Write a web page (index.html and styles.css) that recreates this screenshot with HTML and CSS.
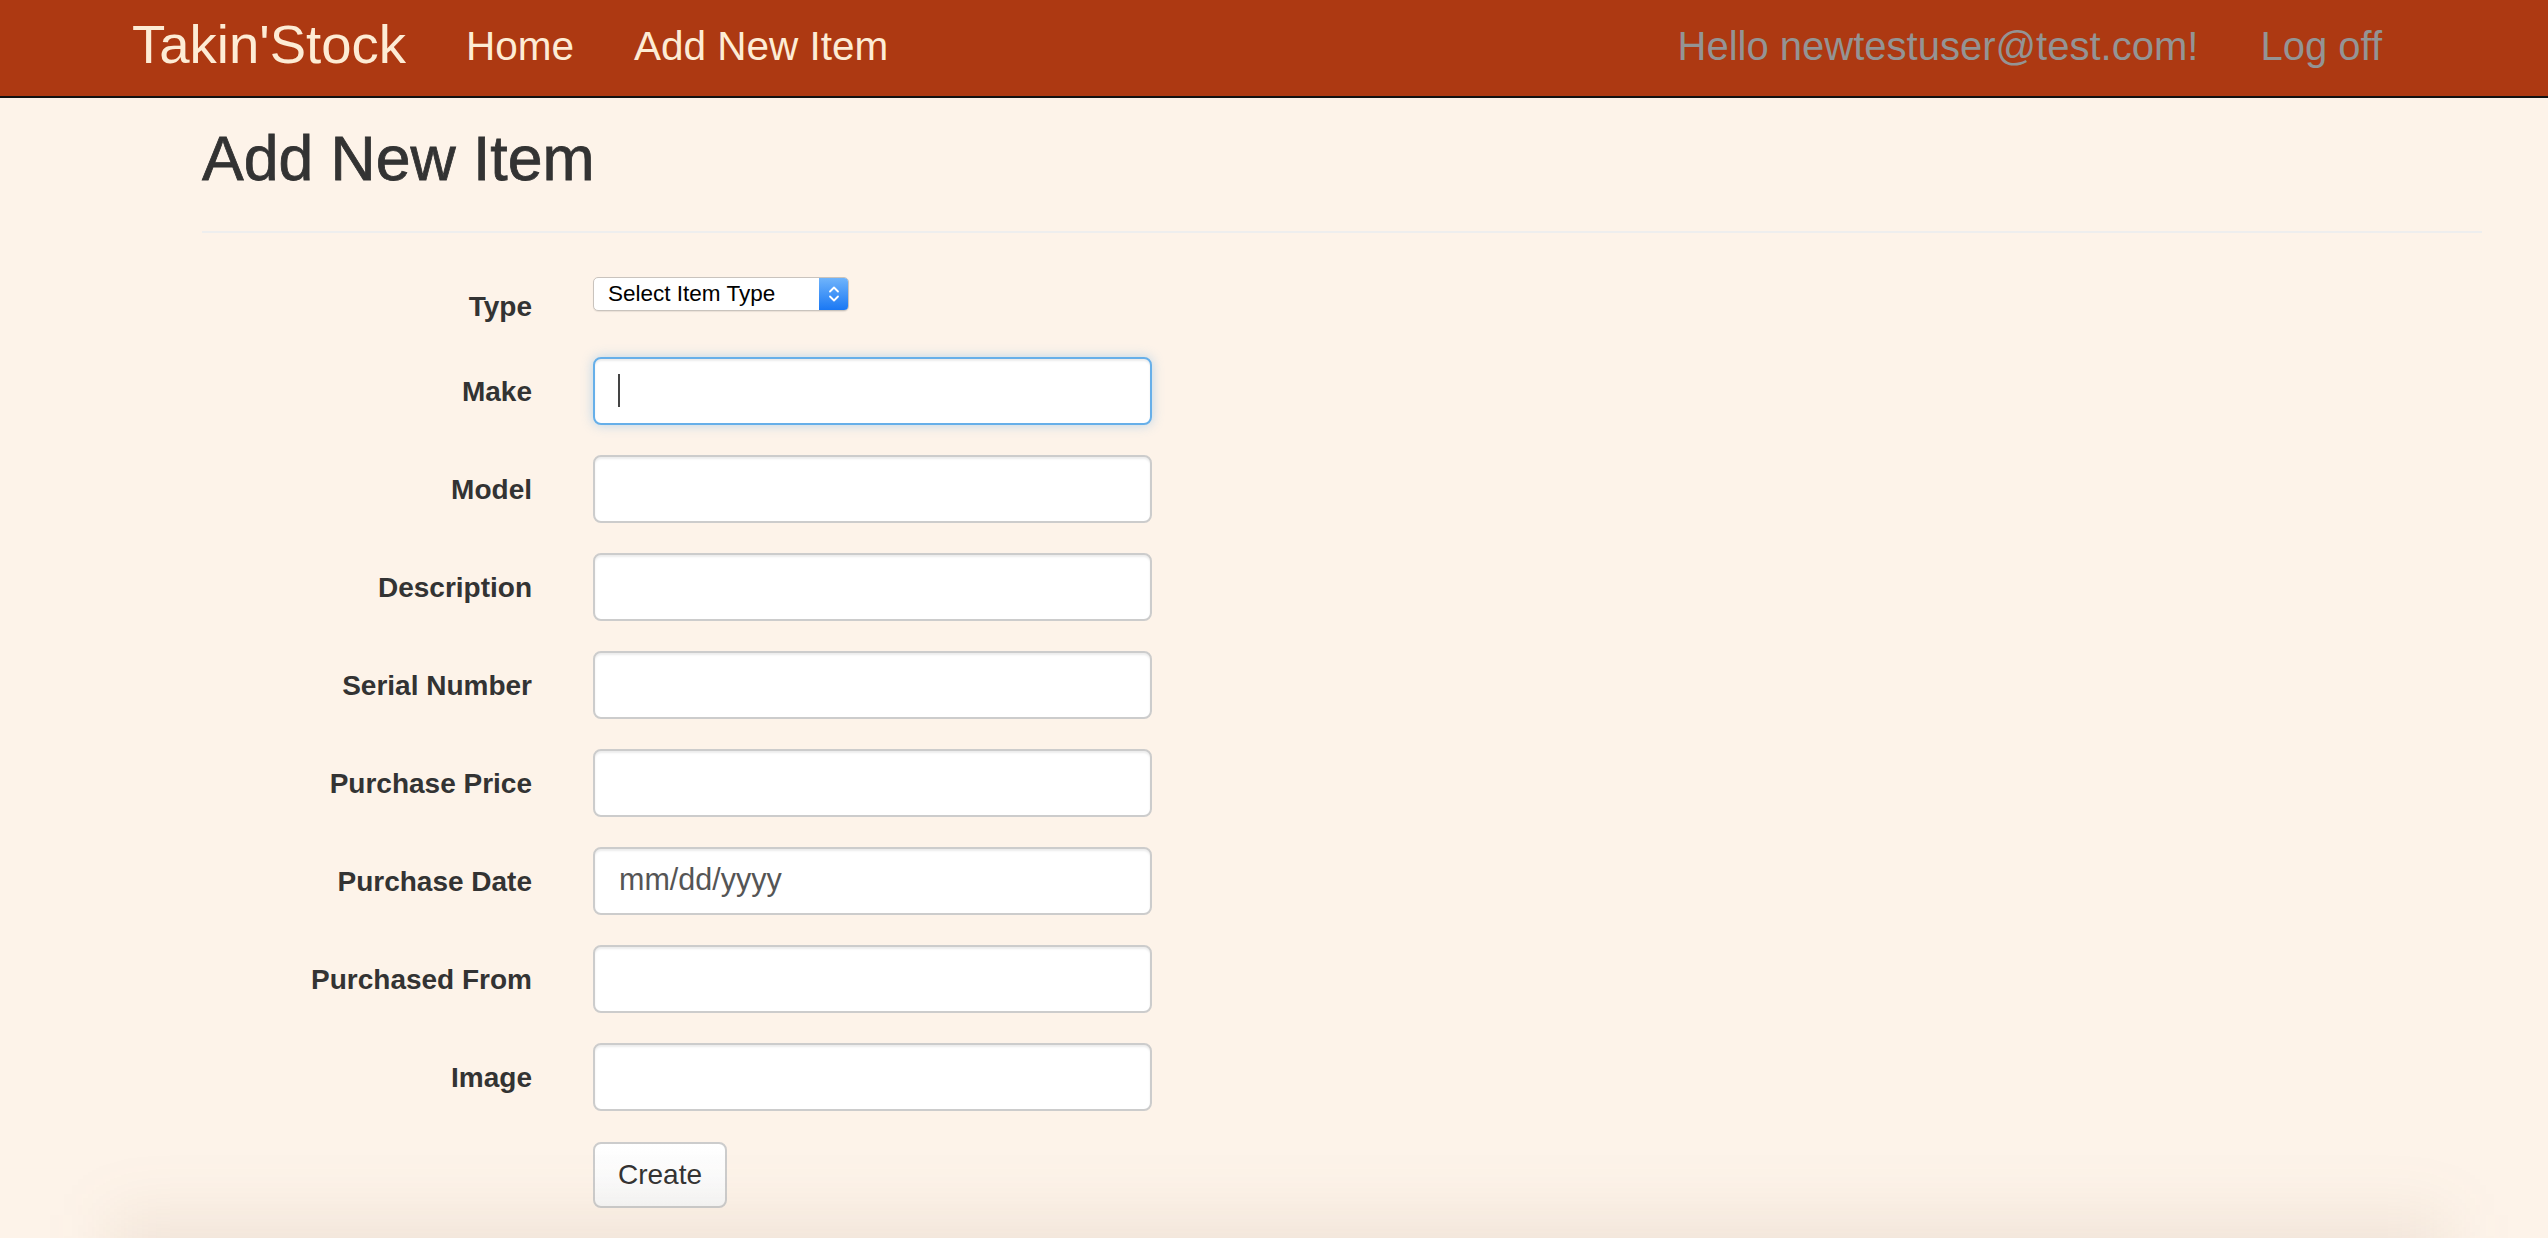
FILE: index.html
```html
<!DOCTYPE html>
<html lang="en">
<head>
<meta charset="utf-8">
<title>Add New Item - Takin'Stock</title>
<link rel="stylesheet" href="styles.css">
</head>
<body>
<header class="navbar">
  <nav class="nav-inner">
    <a class="brand" href="#">Takin'Stock</a>
    <a class="nav-link" href="#">Home</a>
    <a class="nav-link" href="#">Add New Item</a>
    <div class="nav-right">
      <a class="nav-user" href="#">Hello newtestuser@test.com!</a>
      <a class="nav-user" href="#">Log off</a>
    </div>
  </nav>
</header>

<main class="content">
  <h1 class="title">Add New Item</h1>
  <hr class="rule">

  <form class="form">
    <div class="row row-type">
      <label class="label">Type</label>
      <div class="control">
        <div class="select">
          <span class="select-text">Select Item Type</span>
          <span class="select-arrows">
            <svg width="14" height="22" viewBox="0 0 14 22"><path d="M3 8.5 L7 4.5 L11 8.5" fill="none" stroke="#fff" stroke-width="1.8" stroke-linecap="round" stroke-linejoin="round"/><path d="M3 13.5 L7 17.5 L11 13.5" fill="none" stroke="#fff" stroke-width="1.8" stroke-linecap="round" stroke-linejoin="round"/></svg>
          </span>
        </div>
      </div>
    </div>
    <div class="row">
      <label class="label">Make</label>
      <div class="control">
        <div class="field-wrap">
          <input class="input focused" type="text">
          <span class="caret"></span>
        </div>
      </div>
    </div>
    <div class="row">
      <label class="label">Model</label>
      <div class="control"><input class="input" type="text"></div>
    </div>
    <div class="row">
      <label class="label">Description</label>
      <div class="control"><input class="input" type="text"></div>
    </div>
    <div class="row">
      <label class="label">Serial Number</label>
      <div class="control"><input class="input" type="text"></div>
    </div>
    <div class="row">
      <label class="label">Purchase Price</label>
      <div class="control"><input class="input" type="text"></div>
    </div>
    <div class="row">
      <label class="label">Purchase Date</label>
      <div class="control"><input class="input" type="text" placeholder="mm/dd/yyyy"></div>
    </div>
    <div class="row">
      <label class="label">Purchased From</label>
      <div class="control"><input class="input" type="text"></div>
    </div>
    <div class="row">
      <label class="label">Image</label>
      <div class="control"><input class="input" type="text"></div>
    </div>
    <div class="row row-button">
      <span class="label"></span>
      <div class="control"><button class="btn" type="button">Create</button></div>
    </div>
  </form>
</main>

<div class="bottom-shadow"></div>
</body>
</html>
```

FILE: styles.css
```css
html, body {
  margin: 0;
  padding: 0;
}
body {
  background: #fdf3e9;
  font-family: "Liberation Sans", Arial, sans-serif;
  color: #333;
  font-size: 28px;
  overflow: hidden;
  height: 1238px;
}

/* Navbar */
.navbar {
  background: #ad3912;
  height: 96px;
  border-bottom: 2px solid #111;
}
.nav-inner {
  display: flex;
  align-items: flex-start;
  padding-left: 132px;
  padding-right: 166px;
  height: 96px;
}
.brand {
  font-size: 54.5px;
  line-height: 55px;
  padding-top: 17px;
  color: #fdecd5;
  text-decoration: none;
  margin-right: 60px;
}
.nav-link {
  font-size: 40.5px;
  line-height: 40px;
  padding-top: 26px;
  color: #fdecd5;
  text-decoration: none;
  margin-right: 60px;
}
.nav-right {
  margin-left: auto;
  display: flex;
  gap: 62px;
}
.nav-user {
  font-size: 40px;
  line-height: 40px;
  padding-top: 26px;
  color: #949494;
  text-decoration: none;
}

/* Content */
.content {
  margin-left: 202px;
  width: 2280px;
}
.title {
  margin: 26px 0 0;
  font-size: 62.5px;
  line-height: 68px;
  font-weight: 400;
  -webkit-text-stroke: 0.8px #333;
  color: #333;
}
.rule {
  margin: 39px 0 0;
  border: 0;
  border-top: 2px solid #eeeeee;
  height: 0;
}

/* Form */
.form {
  margin-top: 39px;
  display: flex;
  flex-direction: column;
  gap: 30px;
}
.row {
  display: grid;
  grid-template-columns: 330px 559px;
  column-gap: 61px;
  align-items: start;
}
.label {
  text-align: right;
  font-weight: 700;
  font-size: 28px;
  line-height: 40px;
  padding-top: 15px;
  color: #333;
}
.row-button .label {
  padding-top: 0;
}
.control {
  display: flex;
}

.select {
  margin-top: 5px;
  width: 256px;
  height: 34px;
  box-sizing: border-box;
  display: flex;
  align-items: stretch;
  background: #fff;
  border: 1px solid #c9c3bd;
  border-radius: 5px;
  box-shadow: 0 1px 1px rgba(0,0,0,0.08);
  overflow: hidden;
}
.select-text {
  flex: 1;
  font-size: 22.5px;
  line-height: 32px;
  padding-left: 14px;
  color: #000;
}
.select-arrows {
  width: 29px;
  display: flex;
  align-items: center;
  justify-content: center;
  background: linear-gradient(#6fb4fb, #1a78f4);
}

.field-wrap {
  position: relative;
  display: flex;
}
.input {
  width: 559px;
  height: 68px;
  box-sizing: border-box;
  border: 2px solid #cccccc;
  border-radius: 8px;
  background: #fff;
  padding: 0 24px;
  font-family: "Liberation Sans", Arial, sans-serif;
  font-size: 28px;
  color: #555;
  box-shadow: inset 0 2px 2px rgba(0,0,0,0.075);
  outline: none;
  margin: 0;
}
.input::placeholder {
  color: #555;
  opacity: 1;
  font-size: 30.5px;
}
.input.focused {
  border-color: #66afe9;
  box-shadow: inset 0 2px 2px rgba(0,0,0,0.075), 0 0 12px rgba(102,175,233,0.45);
}
.caret {
  position: absolute;
  left: 25px;
  top: 17px;
  width: 2px;
  height: 33px;
  background: #444;
}

.btn {
  width: 134px;
  height: 66px;
  box-sizing: border-box;
  border: 2px solid #cccccc;
  border-radius: 8px;
  background: linear-gradient(#ffffff, #f7f7f7);
  font-family: "Liberation Sans", Arial, sans-serif;
  font-size: 28px;
  color: #333;
  padding: 0;
  margin-top: 1px;
}

.bottom-shadow {
  position: fixed;
  left: 110px;
  right: 100px;
  top: 1215px;
  height: 120px;
  background: rgba(120, 90, 60, 0.09);
  filter: blur(32px);
  pointer-events: none;
}
```
